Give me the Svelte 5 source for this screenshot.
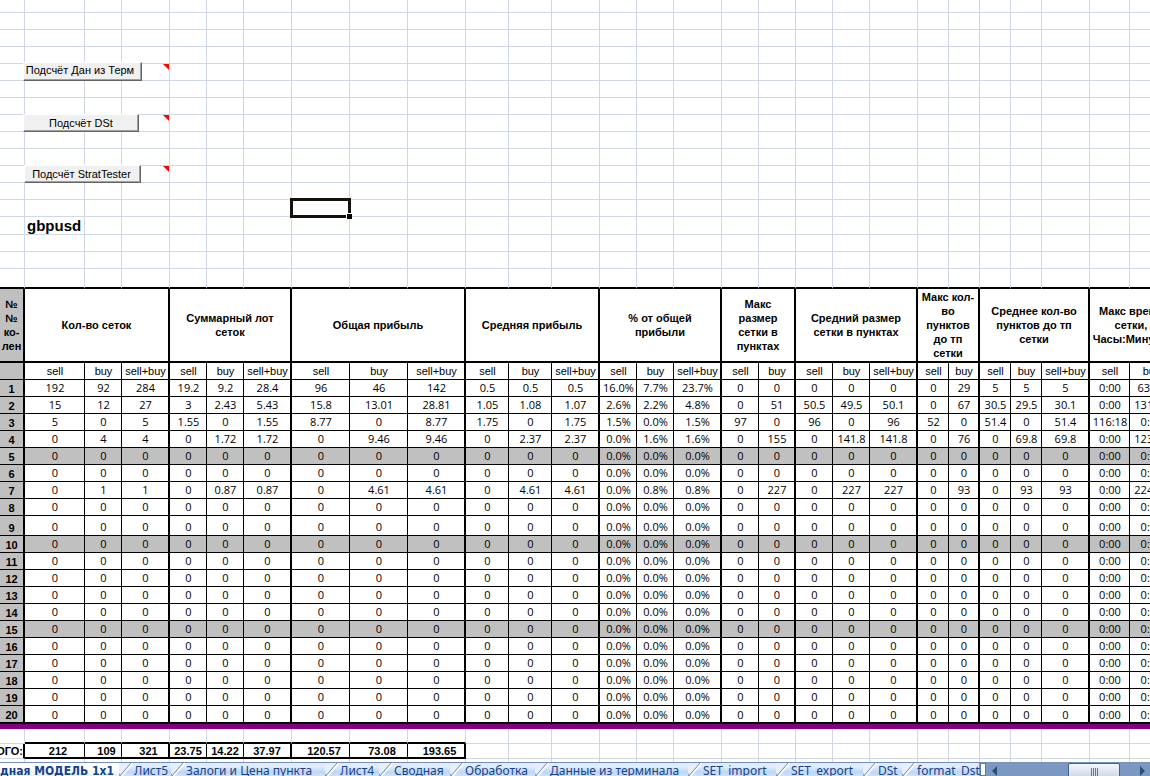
<script>
  const groups = [
    { title: ['Кол-во сеток'], cols: [60, 37, 48] },
    { title: ['Суммарный лот', 'сеток'], cols: [37, 37, 48] },
    { title: ['Общая прибыль'], cols: [58, 58, 58] },
    { title: ['Средняя прибыль'], cols: [43, 43, 48] },
    { title: ['% от общей', 'прибыли'], cols: [37, 37, 48] },
    { title: ['Макс', 'размер', 'сетки в', 'пунктах'], cols: [37, 37] },
    { title: ['Средний размер', 'сетки в пунктах'], cols: [37, 37, 48] },
    { title: ['Макс кол-', 'во', 'пунктов', 'до тп', 'сетки'], cols: [31, 31] },
    { title: ['Среднее кол-во', 'пунктов до тп', 'сетки'], cols: [31, 31, 48] },
    { title: ['Макс время', 'сетки,', 'Часы:Минуты'], cols: [40, 44] },
  ];
  const kinds = ['sell', 'buy', 'sell+buy'];
  const columns = groups.flatMap((g) =>
    g.cols.map((width, i) => ({ width, kind: kinds[i], last: i === g.cols.length - 1 }))
  );

  const filled = {
    1: '192 92 284 19.2 9.2 28.4 96 46 142 0.5 0.5 0.5 16.0% 7.7% 23.7% 0 0 0 0 0 0 29 5 5 5 0:00 63:15',
    2: '15 12 27 3 2.43 5.43 15.8 13.01 28.81 1.05 1.08 1.07 2.6% 2.2% 4.8% 0 51 50.5 49.5 50.1 0 67 30.5 29.5 30.1 0:00 131:20',
    3: '5 0 5 1.55 0 1.55 8.77 0 8.77 1.75 0 1.75 1.5% 0.0% 1.5% 97 0 96 0 96 52 0 51.4 0 51.4 116:18 0:00',
    4: '0 4 4 0 1.72 1.72 0 9.46 9.46 0 2.37 2.37 0.0% 1.6% 1.6% 0 155 0 141.8 141.8 0 76 0 69.8 69.8 0:00 123:40',
    7: '0 1 1 0 0.87 0.87 0 4.61 4.61 0 4.61 4.61 0.0% 0.8% 0.8% 0 227 0 227 227 0 93 0 93 93 0:00 224:10',
  };
  const empty = '0 0 0 0 0 0 0 0 0 0 0 0 0.0% 0.0% 0.0% 0 0 0 0 0 0 0 0 0 0 0:00 0:00';
  const rows = Array.from({ length: 20 }, (_, i) => ({
    n: i + 1,
    cells: (filled[i + 1] ?? empty).split(' '),
  }));
  const totals = ['212', '109', '321', '23.75', '14.22', '37.97', '120.57', '73.08', '193.65'];

  const top = Array.from({ length: 17 }, (_, i) => i);
  const macros = { 4: 'Подсчёт Дан из Терм', 7: 'Подсчёт DSt', 10: 'Подсчёт StratTester' };

  const tabs = [
    { name: 'Лист5', width: 52 },
    { name: 'Залоги и Цена пункта', width: 154 },
    { name: 'Лист4', width: 54 },
    { name: 'Сводная', width: 71 },
    { name: 'Обработка', width: 85 },
    { name: 'Данные из терминала', width: 153 },
    { name: 'SET_import', width: 88 },
    { name: 'SET_export', width: 87 },
    { name: 'DSt', width: 39 },
    { name: 'format_Dst', width: 77 },
  ];
</script>

<div class="book">
  <main class="sheet">
    <table>
      <colgroup>
        <col style="width: 25px" />
        {#each columns as c}<col style="width: {c.width}px" />{/each}
      </colgroup>
      <tbody class="blank">
        {#each top as r}
          <tr class:first={r === 0} class:tall={r === 13} class:last={r === 16}>
            <td></td>
            {#each columns as c, i}
              <td class:note={i === 2 && macros[r]}>
                {#if i === 0 && macros[r]}
                  <button class="macro m{r}">{macros[r]}</button>
                {:else if i === 0 && r === 13}
                  <b class="pair">gbpusd</b>
                {/if}
                {#if i === 6 && r === 12}<span class="cursor"><i></i></span>{/if}
              </td>
            {/each}
          </tr>
        {/each}
      </tbody>
      <tbody class="data">
        <tr class="titles">
          <th class="num">№<br />№<br />ко-<br />лен</th>
          {#each groups as g}
            <th class="edge" colspan={g.cols.length}>
              {#each g.title as line, i}{#if i}<br />{/if}{line}{/each}
            </th>
          {/each}
        </tr>
        <tr class="kinds">
          <th class="num"></th>
          {#each columns as c}<td class:edge={c.last}>{c.kind}</td>{/each}
        </tr>
        {#each rows as row}
          <tr class:shade={row.n % 5 === 0 && row.n < 20} class:nine={row.n === 9} class:end={row.n === 20}>
            <th class="num">{row.n}</th>
            {#each row.cells as v, i}<td class:edge={columns[i].last}>{v}</td>{/each}
          </tr>
        {/each}
      </tbody>
      <tbody class="blank foot">
        <tr class="band"><td colspan={columns.length + 1}></td></tr>
        <tr class="gap">
          <td></td>
          {#each columns as c, i}<td class:over={i < 9}></td>{/each}
        </tr>
        <tr class="totals">
          <th><span>ИТОГО:</span></th>
          {#each columns as c, i}
            <td class:sum={i < 9} class:edge={i < 9 && c.last} class:wide={i < 3 || i > 5}>{totals[i] ?? ''}</td>
          {/each}
        </tr>
        <tr class="tail"><td></td>{#each columns as c}<td></td>{/each}</tr>
      </tbody>
    </table>
  </main>

  <footer>
    <nav>
      <button class="tab active"><span>Сводная МОДЕЛЬ 1x1</span></button>
      {#each tabs as t}
        <button class="tab" style="width: {t.width}px">
          <svg width="14" height="14" viewBox="0 0 14 14" aria-hidden="true">
            <path d="M0 0H12L0 14Z" fill="#e6effb" />
            <path d="M0 10 L3 14 H0Z" fill="#8aa4cc" />
            <path d="M1.500 14 L13.500 0" stroke="#fff" stroke-width="2" />
            <path d="M0 14 L12 0" stroke="#6c87b3" />
          </svg>
          <span>{t.name}</span>
        </button>
      {/each}
    </nav>
    <div class="scroll">
      <span class="split"></span>
      <button class="arrow" aria-label="Left"><svg width="5" height="10" viewBox="0 0 5 10"><path d="M5 0V10L0 5Z" fill="#2c4a7c" /></svg></button>
      <div class="track"><div class="thumb"><i></i><i></i><i></i><i></i></div></div>
      <button class="arrow" aria-label="Right"><svg width="5" height="10" viewBox="0 0 5 10"><path d="M0 0V10L5 5Z" fill="#2c4a7c" /></svg></button>
    </div>
  </footer>
</div>

<style>
  :global(body) { margin: 0; overflow: hidden; background: #fff; }
  .book {
    display: flex;
    flex-direction: column;
    height: 100vh;
    color: #000;
    font: 11px/14px "Liberation Sans", Arial, sans-serif;
  }
  .sheet { flex: 1; min-height: 0; overflow: hidden; }
  table { width: max-content; table-layout: fixed; border-collapse: separate; border-spacing: 0; }
  td, th { box-sizing: border-box; padding: 0; height: 17px; white-space: nowrap; text-align: center; vertical-align: bottom; }

  .blank td, .totals th { position: relative; border-right: 1px solid #d0d7e5; border-bottom: 1px solid #d0d7e5; }
  .blank .first td { height: 13px; }
  .blank .tall td { height: 18px; }
  .blank .last td { height: 20px; border-bottom: 2px solid #000; }
  .blank .note::after {
    content: "";
    position: absolute;
    top: 0;
    right: 0;
    border-top: 6px solid #f00;
    border-left: 6px solid transparent;
  }
  .macro {
    position: absolute;
    z-index: 1;
    top: -2px;
    left: -2px;
    box-sizing: border-box;
    width: 119px;
    height: 19px;
    padding: 0 5px 2px 0;
    background: #f0f0f0;
    border: 1px solid;
    border-color: #fff #646464 #646464 #fff;
    box-shadow: inset -1px -1px #a0a0a0;
    font: inherit;
    line-height: 15px;
    color: #000;
  }
  .m7 { top: -1px; width: 116px; height: 18px; padding: 0; }
  .m10 { top: -1px; left: -1px; width: 117px; height: 18px; padding: 0 2px 0 0; }
  .pair { position: absolute; left: 2px; top: 0; font-size: 15px; line-height: 17px; }
  .cursor { position: absolute; z-index: 1; inset: -2px; border: 3px solid #15120c; }
  .cursor i { position: absolute; right: -4px; bottom: -4px; width: 5px; height: 5px; background: #000; border: solid #fff; border-width: 1px 0 0 1px; }

  .data td { padding-left: 1px; border-right: 1px solid #000; border-bottom: 1px solid #000; font-family: "Open Sans", "Noto Sans", sans-serif; line-height: 16px; }
  .data th { border-right: 2px solid #000; border-bottom: 1px solid #000; }
  .data .num { background: #c0c0c0; line-height: 14px; }
  .data .edge { border-right: 2px solid #000; }
  .titles th { height: 74px; vertical-align: middle; border-bottom: 2px solid #000; }
  .kinds td { font-family: inherit; }
  .shade td { background: #c0c0c0; }
  .data .nine td, .data .nine th { height: 20px; }
  .data .end td, .data .end th { height: 18px; border-bottom-width: 2px; }
  .data .end td { line-height: 15px; }

  .blank .band td { height: 5px; background: #800080; border: 0; }
  .blank .gap td { height: 15px; }
  .blank .gap .over { border-bottom: 2px solid #000; }
  .totals th { height: 15px; border-right: 2px solid #000; }
  .totals th span { position: absolute; right: 0; top: 0; }
  .blank.foot .totals td { height: 15px; line-height: 11px; font-weight: bold; }
  .blank.foot .totals .sum { border-right: 1px solid #000; border-bottom: 2px solid #000; }
  .blank.foot .totals .edge { border-right-width: 2px; }
  .totals .wide { padding-left: 7px; }
  .blank .tail td { height: 20px; }

  footer {
    display: flex;
    flex: none;
    height: 13px;
    overflow: hidden;
    border-top: 1px solid #7591b8;
    background: #7a98c2;
  }
  nav { display: flex; flex: none; }
  .tab {
    position: relative;
    display: flex;
    justify-content: flex-start;
    flex: none;
    box-sizing: border-box;
    height: 22px;
    padding: 0 0 0 15px;
    border: 0;
    background: linear-gradient(#e0ecfb 0 4px, #bdd6f6 9px, #d5e5fa 14px);
    color: #15428b;
    font: 12px/16px "Noto Sans", sans-serif;
    white-space: nowrap;
  }
  .tab svg { position: absolute; left: 0; top: 0; }
  .tab span { position: relative; }
  .active {
    width: 119px;
    padding: 0 5px 0 0;
    justify-content: flex-end;
    background: linear-gradient(#fff 6px, #e6effb 14px);
    font-family: "DejaVu Sans Condensed", "DejaVu Sans", sans-serif;
    font-weight: bold;
    overflow: hidden;
  }
  .scroll { flex: 1; display: flex; min-width: 0; }
  .split { flex: none; width: 4px; margin-left: 1px; background: #fff; border: 1px solid #5a78a8; }
  .arrow { flex: none; width: 16px; padding: 3px 0 0; border: 0; background: none; display: flex; justify-content: center; }
  .track { flex: 1; display: flex; justify-content: flex-end; padding-right: 14px; }
  .thumb {
    display: flex;
    justify-content: center;
    gap: 1px;
    box-sizing: border-box;
    width: 52px;
    height: 20px;
    padding-top: 4px;
    border: 1px solid #44608f;
    border-radius: 2px;
    background: linear-gradient(#f4f7fb, #c9d5e6 14px);
  }
  .thumb i { width: 1px; height: 8px; background: #5a78a8; }
</style>
